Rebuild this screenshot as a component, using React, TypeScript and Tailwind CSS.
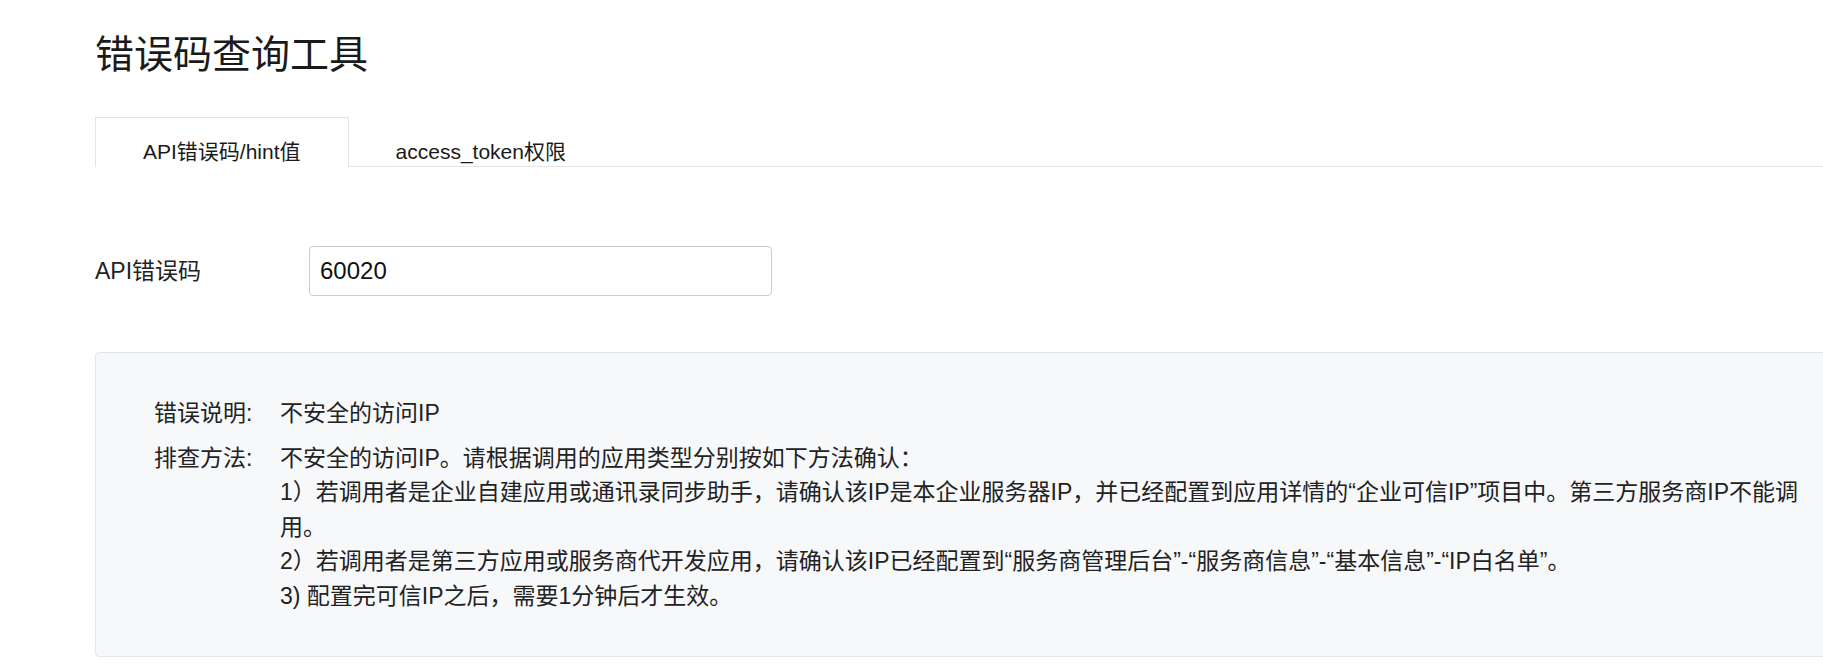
export default function App() {
  const font = { fontFamily: '"Liberation Sans", "Noto Sans CJK SC", sans-serif' };

  return (
    <div className="w-[1823px] h-[672px] overflow-hidden bg-white text-[#222]" style={font}>
      <div className="ml-[95px] w-[1800px]">
        {/* Title */}
        <h1 className="pt-[32px] text-[39px] leading-[46px] text-[#1a1a1a]">错误码查询工具</h1>

        {/* Tabs */}
        <div className="mt-[39px] flex border-b border-[#e4e4e4]">
          <div className="-mb-px h-[50px] border border-b-0 border-[#e4e4e4] bg-white px-[47px] pt-[20px] text-[21px] leading-[28px] text-[#1a1a1a]">
            API错误码/hint值
          </div>
          <div className="h-[49px] px-[47px] pt-[21px] text-[21px] leading-[28px] text-[#1a1a1a]">
            access_token权限
          </div>
        </div>

        {/* Query row */}
        <div className="mt-[79px] flex items-center">
          <label className="w-[214px] text-[23px] leading-[34px]">API错误码</label>
          <input
            type="text"
            defaultValue="60020"
            className="h-[50px] w-[463px] rounded border border-[#cccccc] px-[10px] text-[24px] text-[#111] outline-none"
          />
        </div>

        {/* Result panel */}
        <div className="mt-[56px] w-[1765px] rounded border border-[#e4e6ea] bg-[#f7f8fa] pb-[43px] pl-[58px] pt-[43px] text-[23px] leading-[34.5px]">
          <div className="flex">
            <div className="w-[126px] shrink-0">错误说明:</div>
            <div>不安全的访问IP</div>
          </div>
          <div className="mt-[10px] flex">
            <div className="w-[126px] shrink-0">排查方法:</div>
            <div className="w-[1520px]">
              <div>不安全的访问IP。请根据调用的应用类型分别按如下方法确认：</div>
              <div>
                1）若调用者是企业自建应用或通讯录同步助手，请确认该IP是本企业服务器IP，并已经配置到应用详情的“企业可信IP”项目中。第三方服务商IP不能调用。
              </div>
              <div>
                2）若调用者是第三方应用或服务商代开发应用，请确认该IP已经配置到“服务商管理后台”-“服务商信息”-“基本信息”-“IP白名单”。
              </div>
              <div>3) 配置完可信IP之后，需要1分钟后才生效。</div>
            </div>
          </div>
        </div>
      </div>
    </div>
  );
}
